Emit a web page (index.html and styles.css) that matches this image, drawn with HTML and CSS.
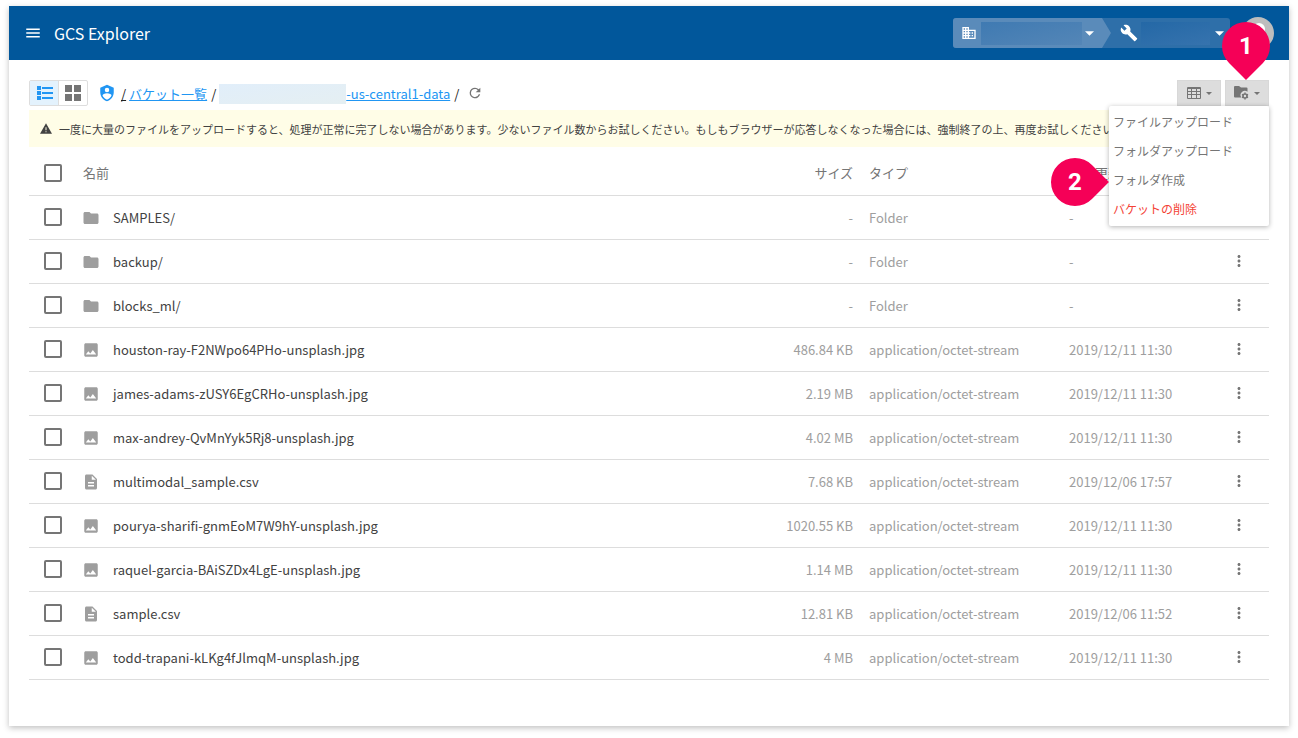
FILE: index.html
```html
<!DOCTYPE html>
<html lang="ja">
<head>
<meta charset="utf-8">
<meta name="viewport" content="width=device-width, initial-scale=1">
<title>GCS Explorer</title>
<link rel="stylesheet" href="styles.css">
</head>
<body>
<svg class="sprite" aria-hidden="true">
  <symbol id="i-folder" viewBox="0 0 24 24"><path d="M10 4H4c-1.100 0-2 .9-2 2v12c0 1.100.9 2 2 2h16c1.100 0 2-.9 2-2V8c0-1.100-.9-2-2-2h-8l-2-2z"/></symbol>
  <symbol id="i-image" viewBox="0 0 24 24"><path d="M21 19V5c0-1.100-.9-2-2-2H5c-1.100 0-2 .9-2 2v14c0 1.100.9 2 2 2h14c1.100 0 2-.9 2-2zM8.500 13.500l2.500 3.010L14.500 12l4.500 6H5l3.500-4.500z"/></symbol>
  <symbol id="i-file" viewBox="0 0 24 24"><path d="M14 2H6c-1.100 0-2 .9-2 2v16c0 1.100.9 2 2 2h12c1.100 0 2-.9 2-2V8l-6-6zm2 16H8v-2h8v2zm0-4H8v-2h8v2zm-3-5V3.500L18.500 9H13z"/></symbol>
  <symbol id="i-more" viewBox="0 0 24 24"><path d="M12 8c1.100 0 2-.9 2-2s-.9-2-2-2-2 .9-2 2 .9 2 2 2zm0 2c-1.100 0-2 .9-2 2s.9 2 2 2 2-.9 2-2-.9-2-2-2zm0 6c-1.100 0-2 .9-2 2s.9 2 2 2 2-.9 2-2-.9-2-2-2z"/></symbol>
  <symbol id="i-caret" viewBox="0 0 10 5"><path d="M0 0h10L5 5z"/></symbol>
</svg>
<div class="window">
  <header class="appbar">
    <button class="plain menu-btn" type="button" aria-label="Menu"><svg width="18" height="18" viewBox="0 0 24 24"><path d="M3 18h18v-2H3v2zm0-5h18v-2H3v2zm0-7v2h18V6H3z"/></svg></button>
    <h1 class="title">GCS Explorer</h1>
    <div class="switcher">
      <button class="plain seg seg-org" type="button" aria-label="Organization"><svg width="16" height="16" viewBox="0 0 24 24"><path d="M12 7V3H2v18h20V7H12zM6 19H4v-2h2v2zm0-4H4v-2h2v2zm0-4H4V9h2v2zm0-4H4V5h2v2zm4 12H8v-2h2v2zm0-4H8v-2h2v2zm0-4H8V9h2v2zm0-4H8V5h2v2zm10 12h-8v-2h2v-2h-2v-2h2v-2h-2V9h8v10zm-2-8h-2v2h2v-2zm0 4h-2v2h2v-2z"/></svg><span class="mask mask-org"></span><svg width="9" height="5"><use href="#i-caret"/></svg></button>
      <button class="plain seg seg-project" type="button" aria-label="Project"><svg width="18" height="18" viewBox="0 0 24 24"><path d="M22.700 19l-9.100-9.100c.9-2.300.4-5-1.500-6.900-2-2-5-2.400-7.400-1.300L9 6 6 9 1.600 4.700C.4 7.100.9 10.100 2.900 12.100c1.900 1.900 4.600 2.400 6.900 1.500l9.100 9.100c.4.400 1 .4 1.400 0l2.300-2.300c.5-.4.5-1.100.1-1.400z"/></svg><span class="mask mask-project"></span><svg width="9" height="5"><use href="#i-caret"/></svg></button>
    </div>
    <button class="plain avatar" type="button" aria-label="Account"><svg width="32" height="32" viewBox="0 0 32 32"><circle cx="16" cy="16" r="16" fill="#bdbdbd"/><circle cx="17" cy="12" r="6" fill="#fff"/><path d="M5 26c2-9 20-9 22 0z" fill="#fff"/></svg></button>
  </header>

  <main class="content">
    <div class="toolbar">
      <div class="toggle">
        <button class="plain toggle-btn active" type="button" aria-label="List view"><svg width="16" height="14" viewBox="0 0 16 14"><path d="M0 0h4v4H0zM0 5h4v4H0zM0 10h4v4H0zM5 1h11v2H5zM5 6h11v2H5zM5 11h11v2H5z"/></svg></button>
        <button class="plain toggle-btn" type="button" aria-label="Grid view"><svg width="16" height="16" viewBox="0 0 16 16"><path d="M0 0h7v7H0zM9 0h7v7H9zM0 9h7v7H0zM9 9h7v7H9z"/></svg></button>
      </div>
      <svg class="shield" width="18" height="18" viewBox="0 0 24 24"><path fill-rule="evenodd" d="M12 1L3 5v6c0 5.550 3.840 10.740 9 12 5.160-1.260 9-6.450 9-12V5l-9-4zm0 4a3 3 0 1 1 0 6 3 3 0 0 1 0-6zm5.130 12A9.700 9.700 0 0 1 12 20.900 9.700 9.700 0 0 1 6.870 17c-.34-.5-.63-1-.87-1.530 0-1.650 2.710-3 6-3s6 1.320 6 3c-.24.530-.53 1.030-.87 1.530z"/></svg>
      <nav class="crumbs" aria-label="パンくず"><a class="root" href="#">/</a><a href="#">バケット一覧</a><span class="sep">/</span><a class="bucket" href="#"><span class="mask-bucket"></span>-us-central1-data</a><span class="sep">/</span></nav>
      <button class="plain refresh" type="button" aria-label="更新"><svg width="16" height="16" viewBox="0 0 24 24"><path d="M17.650 6.350A7.960 7.960 0 0 0 12 4a8 8 0 1 0 7.730 10h-2.080A6 6 0 1 1 12 6c1.660 0 3.140.69 4.220 1.780L13 11h7V4l-2.350 2.350z"/></svg></button>
      <div class="actions">
        <button class="plain action" type="button" aria-label="表示項目"><svg width="14" height="12" viewBox="0 0 14 12"><path fill-rule="evenodd" d="M1 0h12a1 1 0 0 1 1 1v10a1 1 0 0 1-1 1H1a1 1 0 0 1-1-1V1a1 1 0 0 1 1-1zM1 2v2h3V2zm4 0v2h4V2zm5 0v2h3V2zM1 5v2h3V5zm4 0v2h4V5zm5 0v2h3V5zM1 8v3h3V8zm4 0v3h4V8zm5 0v3h3V8z"/></svg><svg width="6" height="3"><use href="#i-caret"/></svg></button>
        <div class="dropdown">
          <button class="plain action" type="button" aria-label="バケット操作" aria-expanded="true"><svg width="15" height="14" viewBox="0 0 15 14"><path d="M1 0h4l2 1.500h5.500a1 1 0 0 1 1 1v3.200a4.300 4.300 0 0 0-6.200 5.800H1a1 1 0 0 1-1-1V1a1 1 0 0 1 1-1z"/><circle cx="11" cy="10" r="2" fill="none" stroke="#757575" stroke-width="1.600"/><path d="M11 6.600v1.200M11 12.200v1.200M8 8.300l1.200.7M12.800 11l1.200.7M8 11.700l1.200-.7M12.800 9l1.200-.7" stroke="#757575" stroke-width="1.500"/></svg><svg width="6" height="3"><use href="#i-caret"/></svg></button>
          <span class="pin pin-down"><b>1</b></span>
          <ul class="menu">
            <li><button class="plain item" type="button">ファイルアップロード</button></li>
            <li><button class="plain item" type="button">フォルダアップロード</button></li>
            <li><button class="plain item" type="button">フォルダ作成</button><span class="pin pin-right"><b>2</b></span></li>
            <li><button class="plain item danger" type="button">バケットの削除</button></li>
          </ul>
        </div>
      </div>
    </div>

    <p class="notice"><svg width="12" height="11" viewBox="0 0 24 21"><path fill-rule="evenodd" d="M12 0L0 21h24zM11 8h2v6h-2zm0 8h2v2h-2z"/></svg><span>一度に大量のファイルをアップロードすると、処理が正常に完了しない場合があります。少ないファイル数からお試しください。もしもブラウザーが応答しなくなった場合には、強制終了の上、再度お試しください。</span></p>

    <table class="files">
      <colgroup><col class="c-check"><col><col class="c-size"><col class="c-type"><col class="c-date"><col class="c-more"></colgroup>
      <thead><tr><th class="check"><input type="checkbox" aria-label="すべて選択"></th><th>名前</th><th class="size">サイズ</th><th>タイプ</th><th class="date">更新日時</th><th></th></tr></thead>
      <tbody>
        <tr><td class="check"><input type="checkbox" aria-label="SAMPLES/"></td><td><span class="name"><svg><use href="#i-folder"/></svg>SAMPLES/</span></td><td class="size">-</td><td>Folder</td><td>-</td><td class="more"><button class="plain" type="button" aria-label="操作"><svg><use href="#i-more"/></svg></button></td></tr>
        <tr><td class="check"><input type="checkbox" aria-label="backup/"></td><td><span class="name"><svg><use href="#i-folder"/></svg>backup/</span></td><td class="size">-</td><td>Folder</td><td>-</td><td class="more"><button class="plain" type="button" aria-label="操作"><svg><use href="#i-more"/></svg></button></td></tr>
        <tr><td class="check"><input type="checkbox" aria-label="blocks_ml/"></td><td><span class="name"><svg><use href="#i-folder"/></svg>blocks_ml/</span></td><td class="size">-</td><td>Folder</td><td>-</td><td class="more"><button class="plain" type="button" aria-label="操作"><svg><use href="#i-more"/></svg></button></td></tr>
        <tr><td class="check"><input type="checkbox" aria-label="houston-ray"></td><td><span class="name"><svg><use href="#i-image"/></svg>houston-ray-F2NWpo64PHo-unsplash.jpg</span></td><td class="size">486.84 KB</td><td>application/octet-stream</td><td>2019/12/11 11:30</td><td class="more"><button class="plain" type="button" aria-label="操作"><svg><use href="#i-more"/></svg></button></td></tr>
        <tr><td class="check"><input type="checkbox" aria-label="james-adams"></td><td><span class="name"><svg><use href="#i-image"/></svg>james-adams-zUSY6EgCRHo-unsplash.jpg</span></td><td class="size">2.19 MB</td><td>application/octet-stream</td><td>2019/12/11 11:30</td><td class="more"><button class="plain" type="button" aria-label="操作"><svg><use href="#i-more"/></svg></button></td></tr>
        <tr><td class="check"><input type="checkbox" aria-label="max-andrey"></td><td><span class="name"><svg><use href="#i-image"/></svg>max-andrey-QvMnYyk5Rj8-unsplash.jpg</span></td><td class="size">4.02 MB</td><td>application/octet-stream</td><td>2019/12/11 11:30</td><td class="more"><button class="plain" type="button" aria-label="操作"><svg><use href="#i-more"/></svg></button></td></tr>
        <tr><td class="check"><input type="checkbox" aria-label="multimodal_sample.csv"></td><td><span class="name"><svg><use href="#i-file"/></svg>multimodal_sample.csv</span></td><td class="size">7.68 KB</td><td>application/octet-stream</td><td>2019/12/06 17:57</td><td class="more"><button class="plain" type="button" aria-label="操作"><svg><use href="#i-more"/></svg></button></td></tr>
        <tr><td class="check"><input type="checkbox" aria-label="pourya-sharifi"></td><td><span class="name"><svg><use href="#i-image"/></svg>pourya-sharifi-gnmEoM7W9hY-unsplash.jpg</span></td><td class="size">1020.55 KB</td><td>application/octet-stream</td><td>2019/12/11 11:30</td><td class="more"><button class="plain" type="button" aria-label="操作"><svg><use href="#i-more"/></svg></button></td></tr>
        <tr><td class="check"><input type="checkbox" aria-label="raquel-garcia"></td><td><span class="name"><svg><use href="#i-image"/></svg>raquel-garcia-BAiSZDx4LgE-unsplash.jpg</span></td><td class="size">1.14 MB</td><td>application/octet-stream</td><td>2019/12/11 11:30</td><td class="more"><button class="plain" type="button" aria-label="操作"><svg><use href="#i-more"/></svg></button></td></tr>
        <tr><td class="check"><input type="checkbox" aria-label="sample.csv"></td><td><span class="name"><svg><use href="#i-file"/></svg>sample.csv</span></td><td class="size">12.81 KB</td><td>application/octet-stream</td><td>2019/12/06 11:52</td><td class="more"><button class="plain" type="button" aria-label="操作"><svg><use href="#i-more"/></svg></button></td></tr>
        <tr><td class="check"><input type="checkbox" aria-label="todd-trapani"></td><td><span class="name"><svg><use href="#i-image"/></svg>todd-trapani-kLKg4fJlmqM-unsplash.jpg</span></td><td class="size">4 MB</td><td>application/octet-stream</td><td>2019/12/11 11:30</td><td class="more"><button class="plain" type="button" aria-label="操作"><svg><use href="#i-more"/></svg></button></td></tr>
      </tbody>
    </table>
  </main>
</div>
</body>
</html>
```

FILE: styles.css
```css
* { box-sizing: border-box; }

body {
  margin: 0;
  padding: 6px 9px 12px;
  background: #fff;
  color: #424242;
  font: 13px/20px "Noto Sans CJK JP", sans-serif;
}

svg { display: block; flex: none; fill: currentColor; }
.sprite { position: absolute; width: 0; height: 0; }

.plain {
  display: flex;
  align-items: center;
  margin: 0;
  padding: 0;
  border: 0;
  background: none;
  color: inherit;
  font: inherit;
  cursor: pointer;
}

.window {
  background: #fff;
  box-shadow: 0 2px 6px rgba(0, 0, 0, 0.25);
}

/* App bar */
.appbar {
  display: flex;
  align-items: center;
  height: 54px;
  padding: 0 15px;
  background: #01579b;
  color: #fff;
}
.title {
  margin: 0 auto 0 12px;
  font-size: 16px;
  line-height: 24px;
  font-weight: 400;
}
.switcher {
  display: flex;
  height: 30px;
  border-radius: 3px;
  overflow: hidden;
  background: #2e6fa9;
}
.seg { padding-left: 8px; }
.seg-org {
  width: 158px;
  background: #5a8bba;
  clip-path: polygon(0 0, 149px 0, 100% 50%, 149px 100%, 0 100%);
}
.seg-project { width: 119px; padding-left: 9px; }
.mask { height: 23px; }
.mask-org {
  width: 101px;
  margin: 0 3px 0 4px;
  background: linear-gradient(165deg, #3f7ab2, #5486b7);
}
.mask-project {
  width: 69px;
  margin: 0 5px 0 3px;
  background: linear-gradient(165deg, #2468a6, #3673ae);
}
.avatar { margin-left: 12px; }

.content { padding: 20px 20px 46px; }

/* Toolbar */
.toolbar { display: flex; align-items: center; height: 26px; }
.toggle {
  display: flex;
  height: 26px;
  border: 1px solid #ddd;
  border-radius: 2px;
}
.toggle-btn {
  justify-content: center;
  width: 28px;
  color: #757575;
}
.toggle-btn.active {
  width: 29px;
  padding-left: 2px;
  border-right: 1px solid #ddd;
  background: #e3f2fd;
  color: #2196f3;
}
.shield { margin: 0 5px 0 10px; color: #2196f3; }
.crumbs {
  display: flex;
  align-items: center;
  gap: 3px;
  padding-top: 2px;
  color: #212121;
}
.crumbs a { color: #2196f3; text-decoration: underline; }
.crumbs .root { color: #212121; }
.crumbs .bucket { display: flex; align-items: center; }
.crumbs .sep { margin-left: 1px; }
.mask-bucket {
  width: 127px;
  height: 20px;
  background: linear-gradient(170deg, #e1eefa, #e5eff2);
}
.refresh { margin-left: 8px; color: #757575; }
.actions { display: flex; gap: 4px; margin-left: auto; }
.action {
  justify-content: center;
  gap: 5px;
  width: 44px;
  height: 26px;
  border: 1px solid #d8d8d8;
  background: #ddd;
  color: #757575;
}

/* Bucket menu */
.dropdown { position: relative; }
.menu {
  position: absolute;
  z-index: 1;
  top: 26px;
  right: 0;
  width: 160px;
  margin: 0;
  padding: 1px 0 3px;
  border-radius: 2px;
  background: #fff;
  box-shadow: 0 1px 5px rgba(0, 0, 0, 0.3);
  color: #757575;
  font-size: 12px;
  list-style: none;
}
.menu li { position: relative; }
.item { width: 100%; height: 29px; padding: 0 4px; text-align: left; }
.danger { color: #f44336; }

/* Numbered callouts */
.pin {
  position: absolute;
  z-index: 2;
  display: grid;
  place-items: center;
  width: 48px;
  height: 48px;
  color: #fff;
  font: 24px/28px Roboto, sans-serif;
}
.pin::before {
  content: "";
  grid-area: 1 / 1;
  width: 48px;
  height: 48px;
  border-radius: 50% 50% 0 50%;
  background: #f50057;
}
.pin b { grid-area: 1 / 1; z-index: 1; }
.pin-down { right: -1px; bottom: 36px; }
.pin-down::before { transform: rotate(45deg); }
.pin-right { top: -7px; left: -58px; }
.pin-right::before { transform: rotate(-45deg); }

/* Notice */
.notice {
  display: flex;
  align-items: center;
  gap: 7px;
  height: 37px;
  margin: 4px 0 0;
  padding: 0 11px;
  background: #fffde7;
  font-size: 11px;
  white-space: nowrap;
  overflow: hidden;
}

/* File table */
.files {
  width: 100%;
  border-collapse: separate;
  border-spacing: 0;
  table-layout: fixed;
}
.c-check { width: 46px; }
.c-size { width: 120px; }
.c-type { width: 200px; }
.c-date { width: 120px; }
.c-more { width: 88px; }
.files th,
.files td {
  height: 44px;
  padding: 0 8px;
  border-bottom: 1px solid #ddd;
  color: #9e9e9e;
  text-align: left;
  white-space: nowrap;
}
.files th { height: 49px; padding-top: 3px; color: #757575; font-weight: 400; }
.files .check { padding-left: 15px; padding-right: 0; }
.files td.check { padding-bottom: 2px; }
.files .size { text-align: right; }
.files .date { text-align: center; }
.files .more { padding: 0 21px 2px 0; }
.more .plain { margin-left: auto; }
.more svg { width: 18px; height: 18px; color: #757575; }
.name { display: flex; align-items: center; gap: 14px; color: #424242; }
.name svg { width: 18px; height: 18px; margin: 0 -1px; color: #9e9e9e; }
.check input {
  display: block;
  appearance: none;
  width: 18px;
  height: 18px;
  margin: 0;
  border: 2px solid #757575;
  border-radius: 2px;
  background: #fff;
}
.check input:checked { background: #2196f3; }
```
